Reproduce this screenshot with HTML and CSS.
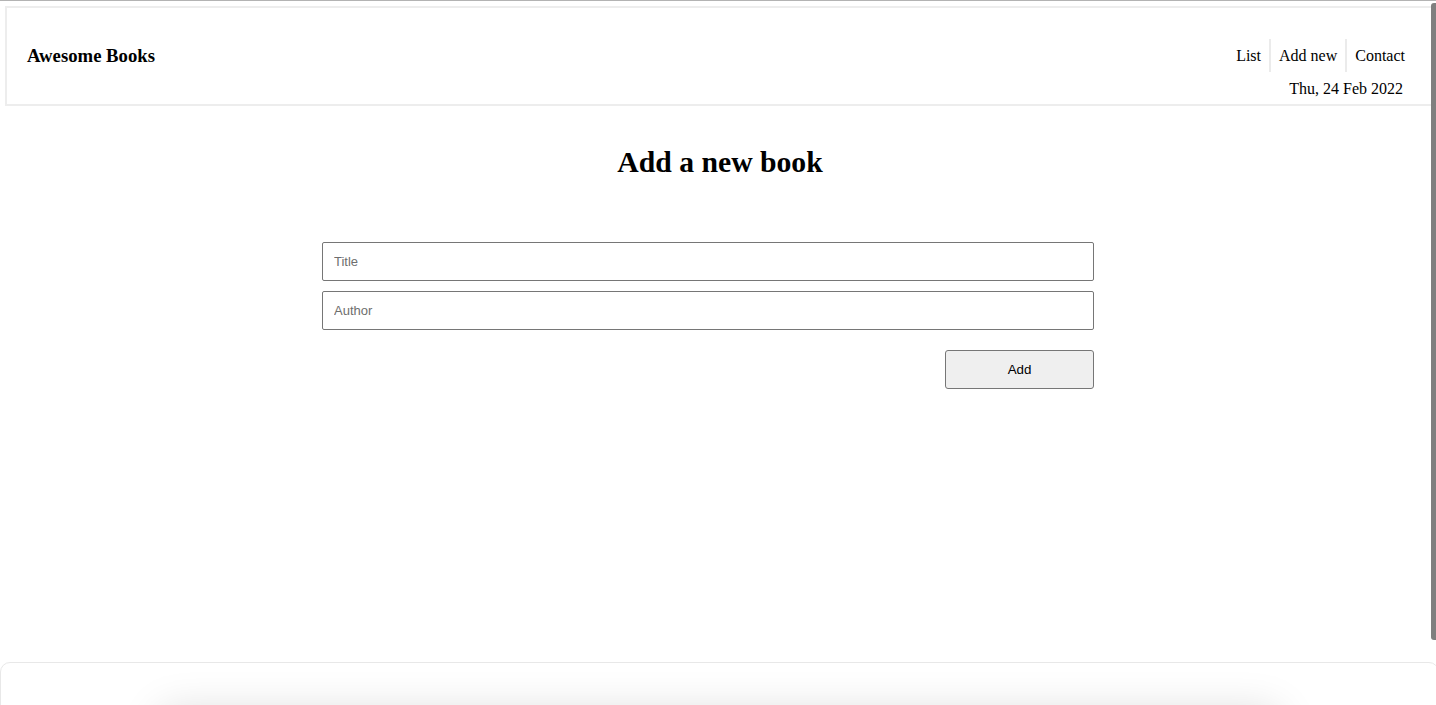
FILE: index.html
```html
<!DOCTYPE html>
<html lang="en">
<head>
<meta charset="utf-8">
<title>Awesome Books</title>
<link rel="stylesheet" href="styles.css">
</head>
<body>
<div class="page">
  <header class="site-header">
    <h3 class="logo">Awesome Books</h3>
    <div class="header-right">
      <nav>
        <ul class="nav">
          <li class="nav-item">List</li>
          <li class="nav-item">Add new</li>
          <li class="nav-item">Contact</li>
        </ul>
      </nav>
      <p class="date">Thu, 24 Feb 2022</p>
    </div>
  </header>
  <main class="main">
    <h1 class="title">Add a new book</h1>
    <form class="book-form">
      <input class="field" type="text" placeholder="Title">
      <input class="field" type="text" placeholder="Author">
      <div class="actions">
        <button class="add-btn" type="button">Add</button>
      </div>
    </form>
  </main>
  <section class="card">
    <div class="card-inner"></div>
  </section>
</div>
<div class="scroll-thumb"></div>
</body>
</html>
```
FILE: styles.css
```css
html, body {
  margin: 0;
  padding: 0;
  height: 705px;
  overflow: hidden;
  background: #fff;
}
body {
  font-family: "Liberation Serif", "Times New Roman", serif;
  color: #000;
  border-top: 1px solid #b3b3b3;
  box-sizing: border-box;
}
.page {
  overflow: hidden;
}
.site-header {
  display: flex;
  justify-content: space-between;
  margin: 5px -10px 0 5px;
  border: 2px solid #ededed;
  height: 96px;
  padding: 0 31px 0 20px;
}
.logo {
  align-self: center;
  margin: 0;
  font-size: 18.72px;
  font-weight: bold;
}
.header-right {
  display: flex;
  flex-direction: column;
  align-items: flex-end;
  padding-top: 31px;
}
.nav {
  display: flex;
  list-style: none;
  margin: 0;
  padding: 0;
}
.nav-item {
  font-size: 16px;
  line-height: 19px;
  padding: 7px 8px;
}
.nav-item + .nav-item {
  border-left: 2px solid #ebebeb;
}
.date {
  margin: 8px 0 0;
  padding-right: 10px;
  font-size: 16px;
  line-height: 18px;
}
.main {
  padding: 0;
}
.title {
  margin: 39px 0 0;
  padding-left: 4px;
  text-align: center;
  font-size: 29.7px;
  font-weight: bold;
  line-height: 35px;
}
.book-form {
  width: 772px;
  margin: 62px 0 0 calc(50% - 396px);
}
.field {
  display: block;
  width: 100%;
  box-sizing: border-box;
  height: 39px;
  margin: 0 0 10px;
  border: 1px solid #767676;
  border-radius: 2px;
  padding: 0 11px;
  font-family: "Liberation Sans", Arial, sans-serif;
  font-size: 13px;
  color: #000;
  background: #fff;
}
.field::placeholder {
  color: #6e6e6e;
}
.actions {
  display: flex;
  justify-content: flex-end;
  margin-top: 20px;
}
.add-btn {
  width: 149px;
  height: 39px;
  background: #efefef;
  border: 1px solid #767676;
  border-radius: 3px;
  font-family: "Liberation Sans", Arial, sans-serif;
  font-size: 13.33px;
  color: #000;
  padding: 0;
}
.card {
  margin: 273px -3px 0 0;
  height: 200px;
  border: 1px solid #e8e8e8;
  border-radius: 10px 10px 0 0;
  background: #fff;
}
.card-inner {
  margin: 48px 160px 0;
  height: 200px;
  background: #fff;
  box-shadow: 0 0 40px rgba(0, 0, 0, 0.14);
}
.scroll-thumb {
  position: fixed;
  top: 3px;
  right: 0;
  width: 5px;
  height: 637px;
  background: #7f7f7f;
  border-radius: 3px 0 0 3px;
}
```
